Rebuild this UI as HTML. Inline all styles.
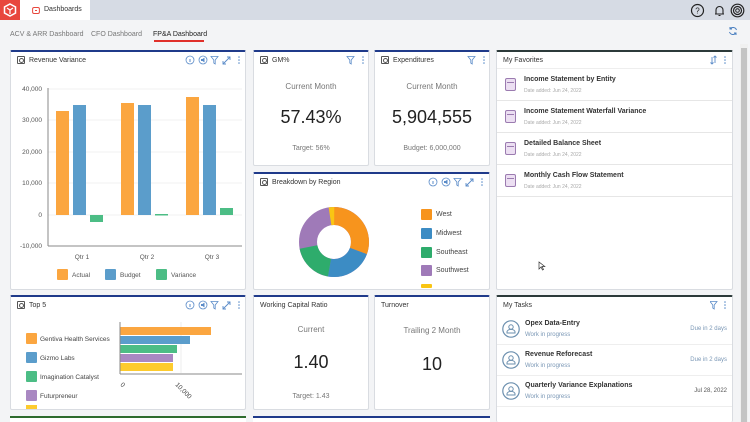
<!DOCTYPE html>
<html><head><meta charset="utf-8"><style>
*{box-sizing:border-box;margin:0;padding:0}
body{width:750px;height:422px;overflow:hidden;background:#f3f4f6;font-family:"Liberation Sans",sans-serif;color:#333;position:relative}
.a{position:absolute}
.card{position:absolute;background:#fff;border:1px solid #d9dce1;border-top:2px solid #1f3a8a;border-radius:2px}
.t{position:absolute;left:6px;top:4px;font-size:7px;color:#333;display:flex;align-items:center;gap:4px}
.ic{width:8px;height:8px;border:1px solid #555;border-radius:1px;display:inline-block;position:relative}
.ic:after{content:"";position:absolute;left:1px;top:1px;width:3px;height:3px;border:1px solid #555;border-radius:50%}
.c{position:absolute;left:0;right:0;text-align:center}
.gray{color:#777}
.fav{position:absolute;left:0;right:0;height:32px;border-bottom:1px solid #e6e6e6}
.fav .d{position:absolute;left:8px;top:9px;width:11px;height:13px;border:1.5px solid #9b7bb0;border-radius:2px;background:#ecdff2}
.fav .d:after{content:"";position:absolute;left:1px;right:1px;top:3px;height:1px;background:#9b7bb0}
.fav b{position:absolute;left:27px;top:7px;font-size:7px;font-weight:bold;color:#333}
.fav i{position:absolute;left:27px;top:19px;font-size:5px;font-style:normal;color:#aaa}
.task{position:absolute;left:0;right:0;height:31px;border-bottom:1px solid #eee}
.task svg{position:absolute;left:5px;top:6px}
.task b{position:absolute;left:28px;top:6px;font-size:7px;color:#333}
.task i{position:absolute;left:28px;top:18px;font-size:6px;font-style:normal;color:#7a97b5}
.task s{position:absolute;right:5px;top:12px;font-size:6px;text-decoration:none;color:#7a97b5}
.sq{position:absolute;width:11px;height:11px;border-radius:1px}
.lg{position:absolute;font-size:7px;color:#444}
</style></head><body>
<div class="a" style="left:0;top:0;width:750px;height:20px;background:#d6dbe4"></div>
<div class="a" style="left:0;top:0;width:20px;height:20px;background:#e8473d"></div>
<svg class="a" style="left:3px;top:3px" width="14" height="14" viewBox="0 0 14 14"><path d="M7 1L12.5 4v6L7 13 1.5 10V4z" fill="none" stroke="#fff" stroke-width="1.5"/><path d="M4 5l3 2 3-2M7 7v4" stroke="#fff" stroke-width="1.2" fill="none"/></svg>
<div class="a" style="left:20px;top:0;width:70px;height:20px;background:#fff"></div>
<svg class="a" style="left:32px;top:6px" width="8" height="8" viewBox="0 0 8 8"><rect x="0.6" y="1.5" width="6.8" height="6" rx="1.5" fill="none" stroke="#e8473d" stroke-width="1"/><rect x="3" y="4" width="2" height="1" fill="#e8473d"/></svg>
<div class="a" style="left:44px;top:6px;font-size:7px;color:#333">Dashboards</div>
<svg class="a" style="left:690px;top:3px" width="56" height="15" viewBox="0 0 56 15"><circle cx="7.5" cy="7.5" r="6" fill="none" stroke="#222" stroke-width="1.2"/><text x="7.5" y="10.5" font-size="8" text-anchor="middle" font-family="Liberation Sans" fill="#222">?</text><path d="M25 11h9M26 11V7a3.5 3.5 0 017 0v4M28.5 12.5h2" fill="none" stroke="#222" stroke-width="1.1"/><circle cx="47.5" cy="7.5" r="6.3" fill="none" stroke="#222" stroke-width="1.2"/><circle cx="47.5" cy="7.5" r="4" fill="none" stroke="#222" stroke-width="1.2"/><circle cx="47.5" cy="7.5" r="1.8" fill="none" stroke="#222" stroke-width="1"/></svg>
<div class="a" style="left:10px;top:31px;font-size:7px;color:#777">ACV &amp; ARR Dashboard</div>
<div class="a" style="left:91px;top:31px;font-size:7px;color:#777">CFO Dashboard</div>
<div class="a" style="left:153px;top:31px;font-size:7px;color:#222">FP&amp;A Dashboard</div>
<div class="a" style="left:154px;top:40px;width:50px;height:1.5px;background:#e0302a"></div>
<svg class="a" style="left:728px;top:26px" width="10" height="10" viewBox="0 0 10 10"><path d="M8.5 4A3.7 3.7 0 002 3M1.5 6A3.7 3.7 0 008 7" fill="none" stroke="#4a7fc0" stroke-width="1"/><path d="M2 1v2h2M8 9V7H6" fill="none" stroke="#4a7fc0" stroke-width="1"/></svg>
<div class="a" style="left:740px;top:44px;width:8px;height:378px;background:#f0f0f0"></div>
<div class="a" style="left:741px;top:48px;width:6px;height:374px;background:#c4c4c4"></div>

<div class="card" style="left:10px;top:50px;width:236px;height:240px">
<div class="t"><span class="ic"></span>Revenue Variance</div>
<svg class="a" style="left:174px;top:3px" width="60" height="10" viewBox="0 0 60 10"><circle cx="5" cy="5" r="4" fill="none" stroke="#5a8bc8" stroke-width=".8"/><path d="M5 4v3" stroke="#5a8bc8"/><circle cx="18" cy="5" r="4" fill="none" stroke="#5a8bc8" stroke-width=".8"/><path d="M16 4h1.5l2-1.5v5l-2-1.5H16z" fill="#5a8bc8"/><path d="M26 1.5h7l-2.8 3.5v4l-1.4-1V5z" fill="none" stroke="#5a8bc8" stroke-width=".8"/><path d="M38 9l7-7M42 2h3v3M38 6v3h3" fill="none" stroke="#5a8bc8" stroke-width=".9"/><circle cx="54" cy="2" r=".8" fill="#5a8bc8"/><circle cx="54" cy="5" r=".8" fill="#5a8bc8"/><circle cx="54" cy="8" r=".8" fill="#5a8bc8"/></svg>
</div>
<svg class="a" style="left:10px;top:80px" width="236" height="210" viewBox="0 0 236 210" font-family="Liberation Sans" font-size="6.5" fill="#555">
<g stroke="#eee" stroke-width=".8"><line x1="38" y1="9" x2="232" y2="9"/><line x1="38" y1="40" x2="232" y2="40"/><line x1="38" y1="72" x2="232" y2="72"/><line x1="38" y1="103" x2="232" y2="103"/><line x1="38" y1="135" x2="232" y2="135"/></g>
<g text-anchor="end"><text x="32" y="11">40,000</text><text x="32" y="42">30,000</text><text x="32" y="74">20,000</text><text x="32" y="105">10,000</text><text x="32" y="137">0</text><text x="32" y="168">-10,000</text></g>
<line x1="38" y1="8" x2="38" y2="166" stroke="#888"/><line x1="38" y1="166" x2="232" y2="166" stroke="#888"/>
<rect x="46" y="31" width="13" height="104" fill="#fba640"/><rect x="63" y="25" width="13" height="110" fill="#5b9dcb"/><rect x="80" y="135" width="13" height="7" fill="#4cbd85"/>
<rect x="111" y="23" width="13" height="112" fill="#fba640"/><rect x="128" y="25" width="13" height="110" fill="#5b9dcb"/><rect x="145" y="134" width="13" height="1.5" fill="#4cbd85"/>
<rect x="176" y="17" width="13" height="118" fill="#fba640"/><rect x="193" y="25" width="13" height="110" fill="#5b9dcb"/><rect x="210" y="128" width="13" height="7" fill="#4cbd85"/>
<g text-anchor="middle"><text x="72" y="179">Qtr 1</text><text x="137" y="179">Qtr 2</text><text x="202" y="179">Qtr 3</text></g>
<rect x="47" y="189" width="11" height="11" rx="1" fill="#fba640"/><text x="62" y="197">Actual</text>
<rect x="95" y="189" width="11" height="11" rx="1" fill="#5b9dcb"/><text x="110" y="197">Budget</text>
<rect x="146" y="189" width="11" height="11" rx="1" fill="#4cbd85"/><text x="161" y="197">Variance</text>
</svg>

<div class="card" style="left:253px;top:50px;width:116px;height:116px">
<div class="t"><span class="ic"></span>GM%</div>
<svg class="a" style="left:92px;top:3px" width="22" height="10" viewBox="0 0 22 10"><path d="M1 1.5h7l-2.8 3.5v4l-1.4-1V5z" fill="none" stroke="#5a8bc8" stroke-width=".8"/><circle cx="17" cy="2" r=".8" fill="#5a8bc8"/><circle cx="17" cy="5" r=".8" fill="#5a8bc8"/><circle cx="17" cy="8" r=".8" fill="#5a8bc8"/></svg>
<div class="c gray" style="top:30px;font-size:8px">Current Month</div>
<div class="c" style="top:55px;font-size:18px;color:#222">57.43%</div>
<div class="c gray" style="top:93px;font-size:7px">Target: 56%</div>
</div>
<div class="card" style="left:374px;top:50px;width:116px;height:116px">
<div class="t"><span class="ic"></span>Expenditures</div>
<svg class="a" style="left:92px;top:3px" width="22" height="10" viewBox="0 0 22 10"><path d="M1 1.5h7l-2.8 3.5v4l-1.4-1V5z" fill="none" stroke="#5a8bc8" stroke-width=".8"/><circle cx="17" cy="2" r=".8" fill="#5a8bc8"/><circle cx="17" cy="5" r=".8" fill="#5a8bc8"/><circle cx="17" cy="8" r=".8" fill="#5a8bc8"/></svg>
<div class="c gray" style="top:30px;font-size:8px">Current Month</div>
<div class="c" style="top:55px;font-size:18px;color:#222">5,904,555</div>
<div class="c gray" style="top:93px;font-size:7px">Budget: 6,000,000</div>
</div>
<div class="card" style="left:253px;top:172px;width:237px;height:118px">
<div class="t"><span class="ic"></span>Breakdown by Region</div>
<svg class="a" style="left:174px;top:3px" width="60" height="10" viewBox="0 0 60 10"><circle cx="5" cy="5" r="4" fill="none" stroke="#5a8bc8" stroke-width=".8"/><path d="M5 4v3" stroke="#5a8bc8"/><circle cx="18" cy="5" r="4" fill="none" stroke="#5a8bc8" stroke-width=".8"/><path d="M16 4h1.5l2-1.5v5l-2-1.5H16z" fill="#5a8bc8"/><path d="M26 1.5h7l-2.8 3.5v4l-1.4-1V5z" fill="none" stroke="#5a8bc8" stroke-width=".8"/><path d="M38 9l7-7M42 2h3v3M38 6v3h3" fill="none" stroke="#5a8bc8" stroke-width=".9"/><circle cx="54" cy="2" r=".8" fill="#5a8bc8"/><circle cx="54" cy="5" r=".8" fill="#5a8bc8"/><circle cx="54" cy="8" r=".8" fill="#5a8bc8"/></svg>
</div>
<svg class="a" style="left:298px;top:206px" width="72" height="72" viewBox="-36 -36 72 72">
<g fill="none" stroke-width="18">
<circle r="26" stroke="#9f7ab8"/>
<path d="M0-26A26 26 0 0 1 24.4 9" stroke="#f7941d"/>
<path d="M24.4 9A26 26 0 0 1 -4.5 25.6" stroke="#3c8cc4"/>
<path d="M-4.5 25.6A26 26 0 0 1 -25.5 5" stroke="#2eac6c"/>
<path d="M-4-25.7A26 26 0 0 1 0.2 -26" stroke="#f9c513"/>
</g></svg>
<div class="sq" style="left:421px;top:209px;background:#f7941d"></div><div class="lg" style="left:436px;top:211px">West</div>
<div class="sq" style="left:421px;top:228px;background:#3c8cc4"></div><div class="lg" style="left:436px;top:230px">Midwest</div>
<div class="sq" style="left:421px;top:247px;background:#2eac6c"></div><div class="lg" style="left:436px;top:249px">Southeast</div>
<div class="sq" style="left:421px;top:265px;background:#9f7ab8"></div><div class="lg" style="left:436px;top:267px">Southwest</div>
<div class="sq" style="left:421px;top:284px;height:4px;background:#f9c513"></div>

<div class="card" style="left:496px;top:50px;width:237px;height:240px;border-top-color:#2c3a3a">
<div class="t" style="top:5px">My Favorites</div>
<svg class="a" style="left:213px;top:3px" width="20" height="10" viewBox="0 0 20 10"><path d="M2 2v7M0.5 7.5L2 9l1.5-1.5M5 8V1M3.5 2.5L5 1l1.5 1.5" fill="none" stroke="#5a8bc8" stroke-width=".9"/><circle cx="15" cy="2" r=".8" fill="#5a8bc8"/><circle cx="15" cy="5" r=".8" fill="#5a8bc8"/><circle cx="15" cy="8" r=".8" fill="#5a8bc8"/></svg>
<div class="a" style="left:0;right:0;top:16px;border-top:1px solid #eee"></div>
<div class="fav" style="top:17px"><span class="d"></span><b>Income Statement by Entity</b><i>Date added: Jun 24, 2022</i></div>
<div class="fav" style="top:49px"><span class="d"></span><b>Income Statement Waterfall Variance</b><i>Date added: Jun 24, 2022</i></div>
<div class="fav" style="top:81px"><span class="d"></span><b>Detailed Balance Sheet</b><i>Date added: Jun 24, 2022</i></div>
<div class="fav" style="top:113px"><span class="d"></span><b>Monthly Cash Flow Statement</b><i>Date added: Jun 24, 2022</i></div>
<svg class="a" style="left:41px;top:209px" width="8" height="10" viewBox="0 0 8 10"><path d="M1 1v7l2-2 1.5 3 1-.5L4 5.5h2.8z" fill="#fff" stroke="#333" stroke-width=".7"/></svg>
</div>

<div class="card" style="left:10px;top:295px;width:236px;height:115px">
<div class="t"><span class="ic"></span>Top 5</div>
<svg class="a" style="left:174px;top:3px" width="60" height="10" viewBox="0 0 60 10"><circle cx="5" cy="5" r="4" fill="none" stroke="#5a8bc8" stroke-width=".8"/><path d="M5 4v3" stroke="#5a8bc8"/><circle cx="18" cy="5" r="4" fill="none" stroke="#5a8bc8" stroke-width=".8"/><path d="M16 4h1.5l2-1.5v5l-2-1.5H16z" fill="#5a8bc8"/><path d="M26 1.5h7l-2.8 3.5v4l-1.4-1V5z" fill="none" stroke="#5a8bc8" stroke-width=".8"/><path d="M38 9l7-7M42 2h3v3M38 6v3h3" fill="none" stroke="#5a8bc8" stroke-width=".9"/><circle cx="54" cy="2" r=".8" fill="#5a8bc8"/><circle cx="54" cy="5" r=".8" fill="#5a8bc8"/><circle cx="54" cy="8" r=".8" fill="#5a8bc8"/></svg>
</div>
<svg class="a" style="left:10px;top:297px" width="236" height="112" viewBox="0 0 236 112" font-family="Liberation Sans" font-size="6.5" fill="#444">
<line x1="171" y1="25" x2="171" y2="76" stroke="#eee"/>
<rect x="110" y="30" width="91" height="8" fill="#fba640"/><rect x="110" y="39" width="70" height="8" fill="#5b9dcb"/><rect x="110" y="48" width="57" height="8" fill="#4cbd85"/><rect x="110" y="57" width="53" height="8" fill="#a988c2"/><rect x="110" y="66" width="53" height="8" fill="#fdcb2e"/>
<line x1="110" y1="25" x2="110" y2="77" stroke="#888"/><line x1="110" y1="77" x2="232" y2="77" stroke="#888"/>
<text transform="translate(110,88) rotate(45)">0</text><text transform="translate(165,88) rotate(45)">10,000</text>
<rect x="16" y="36" width="11" height="11" rx="1" fill="#fba640"/><text x="30" y="44">Gentiva Health Services</text>
<rect x="16" y="55" width="11" height="11" rx="1" fill="#5b9dcb"/><text x="30" y="63">Gizmo Labs</text>
<rect x="16" y="74" width="11" height="11" rx="1" fill="#4cbd85"/><text x="30" y="82">Imagination Catalyst</text>
<rect x="16" y="93" width="11" height="11" rx="1" fill="#a988c2"/><text x="30" y="101">Futurpreneur</text>
<rect x="16" y="108" width="11" height="4" fill="#fdcb2e"/>
</svg>

<div class="card" style="left:253px;top:295px;width:116px;height:115px">
<div class="t" style="top:5px">Working Capital Ratio</div>
<div class="c gray" style="top:28px;font-size:8px">Current</div>
<div class="c" style="top:55px;font-size:18px;color:#222">1.40</div>
<div class="c gray" style="top:96px;font-size:7px">Target: 1.43</div>
</div>
<div class="card" style="left:374px;top:295px;width:116px;height:115px">
<div class="t" style="top:5px">Turnover</div>
<div class="c gray" style="top:29px;font-size:8px">Trailing 2 Month</div>
<div class="c" style="top:57px;font-size:18px;color:#222">10</div>
</div>

<div class="card" style="left:496px;top:295px;width:237px;height:127px;border-top-color:#2c3a3a;border-bottom:none">
<div class="t" style="top:5px">My Tasks</div>
<svg class="a" style="left:213px;top:3px" width="20" height="10" viewBox="0 0 20 10"><path d="M0 1.5h7l-2.8 3.5v4l-1.4-1V5z" fill="none" stroke="#5a8bc8" stroke-width=".8"/><circle cx="15" cy="2" r=".8" fill="#5a8bc8"/><circle cx="15" cy="5" r=".8" fill="#5a8bc8"/><circle cx="15" cy="8" r=".8" fill="#5a8bc8"/></svg>
<div class="task" style="top:17px"><svg width="18" height="18" viewBox="0 0 18 18"><circle cx="9" cy="9" r="8.2" fill="none" stroke="#6b8fae" stroke-width="1.2"/><circle cx="9" cy="7" r="2.2" fill="none" stroke="#6b8fae"/><path d="M5 13h8v-1a3 2 0 00-8 0z" fill="none" stroke="#6b8fae"/></svg><b>Opex Data-Entry</b><i>Work in progress</i><s>Due in 2 days</s></div>
<div class="task" style="top:48px"><svg width="18" height="18" viewBox="0 0 18 18"><circle cx="9" cy="9" r="8.2" fill="none" stroke="#6b8fae" stroke-width="1.2"/><circle cx="9" cy="7" r="2.2" fill="none" stroke="#6b8fae"/><path d="M5 13h8v-1a3 2 0 00-8 0z" fill="none" stroke="#6b8fae"/></svg><b>Revenue Reforecast</b><i>Work in progress</i><s>Due in 2 days</s></div>
<div class="task" style="top:79px"><svg width="18" height="18" viewBox="0 0 18 18"><circle cx="9" cy="9" r="8.2" fill="none" stroke="#6b8fae" stroke-width="1.2"/><circle cx="9" cy="7" r="2.2" fill="none" stroke="#6b8fae"/><path d="M5 13h8v-1a3 2 0 00-8 0z" fill="none" stroke="#6b8fae"/></svg><b>Quarterly Variance Explanations</b><i>Work in progress</i><s style="color:#555">Jul 28, 2022</s></div>
</div>

<div class="a" style="left:10px;top:416px;width:236px;height:6px;background:#fff;border-top:2px solid #2e6b2e"></div>
<div class="a" style="left:253px;top:416px;width:237px;height:6px;background:#fff;border-top:2px solid #1f3a8a"></div>
</body></html>
